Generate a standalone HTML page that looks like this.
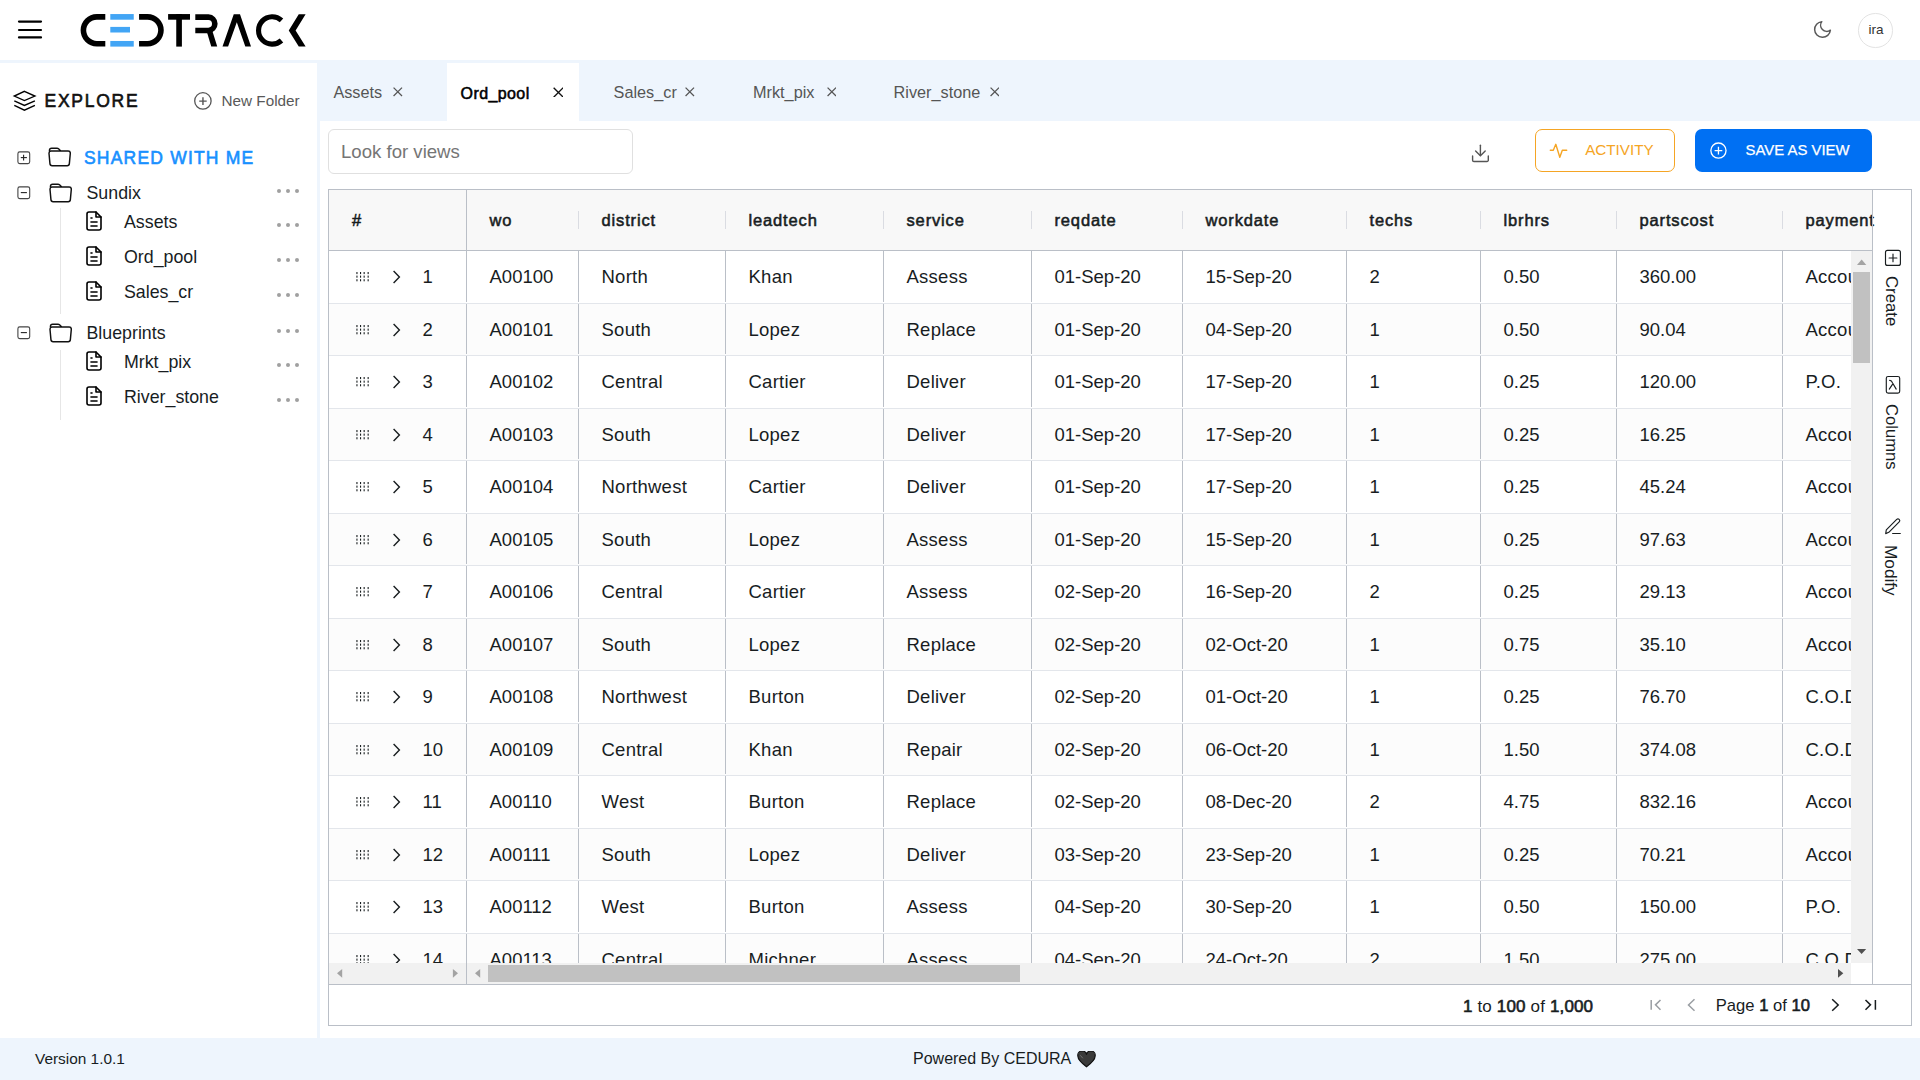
<!DOCTYPE html><html><head><meta charset="utf-8"><title>CEDTRACK</title><style>
*{box-sizing:border-box;margin:0;padding:0}
html,body{width:1920px;height:1080px;overflow:hidden}
body{background:#eef5fd;font-family:"Liberation Sans",sans-serif;color:#181d1f;position:relative}
.abs{position:absolute}
#hdr{position:absolute;left:0;top:0;width:1920px;height:60px;background:#fff}
#side{position:absolute;left:0;top:63px;width:317px;height:975px;background:#fff}
#content{position:absolute;left:320px;top:121px;width:1600px;height:917px;background:#fff}
#acttab{position:absolute;left:447px;top:63px;width:132px;height:58px;background:#fff}
.t{position:absolute;white-space:nowrap;line-height:1}
.tab{font-size:16.25px;color:#555}
.tabx{color:#555}
.tree{font-size:17.8px;color:#181d1f}
.dots{position:absolute;width:22px;height:5px}
.dots i{position:absolute;top:0;width:4.2px;height:4.2px;border-radius:50%;background:#a0a0a0}
#grid{position:absolute;left:328px;top:189px;width:1584px;height:837px;border:1px solid #babfc7;background:#fff;overflow:hidden}
.g{position:absolute}
.hc{font-size:16.5px;color:#181d1f;-webkit-text-stroke:0.55px #181d1f;letter-spacing:0.85px}
.cell{font-size:18.5px;color:#181d1f}
b{font-weight:normal;-webkit-text-stroke:0.6px #181d1f}
#footer{position:absolute;left:0;top:1038px;width:1920px;height:42px}
</style></head><body>
<div id="hdr">
<svg class="abs" style="left:0;top:0" width="60" height="60" viewBox="0 0 60 60"><g stroke="#000" stroke-width="2.2" stroke-linecap="round"><line x1="19" y1="21.6" x2="41" y2="21.6"/><line x1="19" y1="30" x2="41" y2="30"/><line x1="19" y1="37.4" x2="41" y2="37.4"/></g></svg>
<svg class="abs" style="left:0;top:0" width="320" height="60" viewBox="0 0 320 60">
<g fill="none" stroke="#000" stroke-width="5.6">
<path d="M105.3 16.86 H96.87 A13.47 13.47 0 0 0 96.87 43.8 H105.3"/>
<path d="M139.06 16.86 H147.5 A13.47 13.47 0 0 1 147.5 43.8 H139.06"/>
<path d="M195.3 17.1 H208.4 A6.68 6.68 0 0 1 208.4 30.45 H195.3"/>
<path d="M281.5 20.3 A13.7 13.7 0 1 0 281.5 40.5" stroke-width="5.1"/>
</g>
<g fill="#000">
<rect x="168.1" y="14.06" width="21.9" height="5.64"/>
<rect x="176.25" y="14.06" width="5.65" height="32.54"/>
<polygon points="206.6,31 212.4,31 217.2,46.6 211.25,46.6"/>
<polygon points="222.5,46.6 233.75,14.25 240,14.25 251,46.6 245.3,46.6 236.8,22.2 228.1,46.6"/>
<polygon points="298.75,14.25 305.6,14.25 295.6,30.4 305.6,46.6 298.75,46.6 288.75,30.4"/>
</g>
<g fill="#42a5f5">
<rect x="110.3" y="14.06" width="23.45" height="5.64"/>
<rect x="110.3" y="26.9" width="19.7" height="5.6"/>
<rect x="110.3" y="40.96" width="23.45" height="5.64"/>
</g>
</svg>
<svg class="abs" style="left:1812.3px;top:18.5px" width="21" height="21" viewBox="0 0 24 24"><path d="M21 12.79A9 9 0 1 1 11.21 3 7 7 0 0 0 21 12.79z" fill="none" stroke="#595959" stroke-width="1.7" stroke-linejoin="round"/></svg>
<div class="abs" style="left:1858px;top:13px;width:34.5px;height:34.5px;border:1px solid #e3e3e3;border-radius:50%"></div>
<div class="t" style="left:1868.5px;top:22.5px;font-size:13.5px;color:#333">ira</div>
</div>
<div id="side"></div>
<svg class="abs" style="left:0;top:80px" width="50" height="40" viewBox="0 80 50 40"><g fill="none" stroke="#000" stroke-width="1.4" stroke-linejoin="miter"><path d="M24.4 91.3 L34.9 96.1 L24.4 100.6 L14.3 96.1 Z"/><path d="M14.3 100.8 L24.4 105.4 L34.9 100.8"/><path d="M14.3 105.4 L24.4 110.2 L34.9 105.4"/></g></svg>
<div class="t" style="left:44.5px;top:93px;font-size:17.5px;letter-spacing:1.75px;color:#111;-webkit-text-stroke:0.6px #111">EXPLORE</div>
<svg class="abs" style="left:185px;top:85px" width="30" height="30" viewBox="185 85 30 30"><circle cx="202.9" cy="100.9" r="8.2" fill="none" stroke="#555" stroke-width="1.3"/><path d="M199.2 101.1 H206.7 M202.95 97.2 V105" stroke="#555" stroke-width="1.4"/></svg>
<div class="t" style="left:221.5px;top:93px;font-size:15.3px;color:#595959">New Folder</div>
<svg class="abs" style="left:17px;top:151px" width="14" height="14" viewBox="0 0 14 14"><rect x="0.9" y="0.9" width="11.8" height="11.7" rx="1.8" fill="none" stroke="#444" stroke-width="1.1"/><path d="M3.8 6.6 H9.9" stroke="#222" stroke-width="1.1"/><path d="M6.6 3.8 V9.6" stroke="#222" stroke-width="1.1"/></svg>
<svg class="abs" style="left:47.8px;top:146.4px" width="23.3" height="23.3" viewBox="0 0 16 16"><path d="M.54 3.87.5 3a2 2 0 0 1 2-2h3.672a2 2 0 0 1 1.414.586l.828.828A2 2 0 0 0 9.828 3h3.982a2 2 0 0 1 1.992 2.181l-.637 7A2 2 0 0 1 13.174 14H2.826a2 2 0 0 1-1.991-1.819l-.637-7a1.99 1.99 0 0 1 .342-1.31zM2.19 4a1 1 0 0 0-.996 1.09l.637 7a1 1 0 0 0 .995.91h10.348a1 1 0 0 0 .995-.91l.637-7A1 1 0 0 0 13.81 4H2.19zm4.69-1.707A1 1 0 0 0 6.172 2H2.5a1 1 0 0 0-1 .981l.006.139C1.72 3.042 1.95 3 2.19 3h5.396l-.707-.707z" fill="#111"/></svg>
<div class="t" style="left:84px;top:150px;font-size:17.5px;letter-spacing:1.2px;color:#1890ff;-webkit-text-stroke:0.6px #1890ff">SHARED WITH ME</div>
<svg class="abs" style="left:17px;top:186px" width="14" height="14" viewBox="0 0 14 14"><rect x="0.9" y="0.9" width="11.8" height="11.7" rx="1.8" fill="none" stroke="#444" stroke-width="1.1"/><path d="M3.8 6.6 H9.9" stroke="#222" stroke-width="1.1"/></svg>
<svg class="abs" style="left:48.7px;top:181.8px" width="23.3" height="23.3" viewBox="0 0 16 16"><path d="M.54 3.87.5 3a2 2 0 0 1 2-2h3.672a2 2 0 0 1 1.414.586l.828.828A2 2 0 0 0 9.828 3h3.982a2 2 0 0 1 1.992 2.181l-.637 7A2 2 0 0 1 13.174 14H2.826a2 2 0 0 1-1.991-1.819l-.637-7a1.99 1.99 0 0 1 .342-1.31zM2.19 4a1 1 0 0 0-.996 1.09l.637 7a1 1 0 0 0 .995.91h10.348a1 1 0 0 0 .995-.91l.637-7A1 1 0 0 0 13.81 4H2.19zm4.69-1.707A1 1 0 0 0 6.172 2H2.5a1 1 0 0 0-1 .981l.006.139C1.72 3.042 1.95 3 2.19 3h5.396l-.707-.707z" fill="#111"/></svg>
<div class="t tree" style="left:86.5px;top:185px">Sundix</div>
<div class="dots" style="left:277px;top:188.9px"><i style="left:0"></i><i style="left:8.7px"></i><i style="left:17.5px"></i></div>
<div class="abs" style="left:60px;top:208px;width:1px;height:106px;background:#e6e6e6"></div>
<svg class="abs" style="left:82px;top:208.8px" width="24" height="24" viewBox="0 0 24 24" fill="none" stroke="#000" stroke-width="1.6" stroke-linecap="round" stroke-linejoin="round"><path d="M14 3v5h5"/><path d="M17 21h-10a2 2 0 0 1 -2 -2v-14a2 2 0 0 1 2 -2h7l5 5v11a2 2 0 0 1 -2 2z"/><path d="M9 9h1"/><path d="M9 13h6"/><path d="M9 17h6"/></svg>
<div class="t tree" style="left:124px;top:214.39999999999998px">Assets</div>
<div class="dots" style="left:277px;top:222.9px"><i style="left:0"></i><i style="left:8.7px"></i><i style="left:17.5px"></i></div>
<svg class="abs" style="left:82px;top:244px" width="24" height="24" viewBox="0 0 24 24" fill="none" stroke="#000" stroke-width="1.6" stroke-linecap="round" stroke-linejoin="round"><path d="M14 3v5h5"/><path d="M17 21h-10a2 2 0 0 1 -2 -2v-14a2 2 0 0 1 2 -2h7l5 5v11a2 2 0 0 1 -2 2z"/><path d="M9 9h1"/><path d="M9 13h6"/><path d="M9 17h6"/></svg>
<div class="t tree" style="left:124px;top:249.39999999999998px">Ord_pool</div>
<div class="dots" style="left:277px;top:257.9px"><i style="left:0"></i><i style="left:8.7px"></i><i style="left:17.5px"></i></div>
<svg class="abs" style="left:82px;top:279.2px" width="24" height="24" viewBox="0 0 24 24" fill="none" stroke="#000" stroke-width="1.6" stroke-linecap="round" stroke-linejoin="round"><path d="M14 3v5h5"/><path d="M17 21h-10a2 2 0 0 1 -2 -2v-14a2 2 0 0 1 2 -2h7l5 5v11a2 2 0 0 1 -2 2z"/><path d="M9 9h1"/><path d="M9 13h6"/><path d="M9 17h6"/></svg>
<div class="t tree" style="left:124px;top:284.4px">Sales_cr</div>
<div class="dots" style="left:277px;top:292.7px"><i style="left:0"></i><i style="left:8.7px"></i><i style="left:17.5px"></i></div>
<svg class="abs" style="left:17px;top:326px" width="14" height="14" viewBox="0 0 14 14"><rect x="0.9" y="0.9" width="11.8" height="11.7" rx="1.8" fill="none" stroke="#444" stroke-width="1.1"/><path d="M3.8 6.6 H9.9" stroke="#222" stroke-width="1.1"/></svg>
<svg class="abs" style="left:48.7px;top:321.5px" width="23.3" height="23.3" viewBox="0 0 16 16"><path d="M.54 3.87.5 3a2 2 0 0 1 2-2h3.672a2 2 0 0 1 1.414.586l.828.828A2 2 0 0 0 9.828 3h3.982a2 2 0 0 1 1.992 2.181l-.637 7A2 2 0 0 1 13.174 14H2.826a2 2 0 0 1-1.991-1.819l-.637-7a1.99 1.99 0 0 1 .342-1.31zM2.19 4a1 1 0 0 0-.996 1.09l.637 7a1 1 0 0 0 .995.91h10.348a1 1 0 0 0 .995-.91l.637-7A1 1 0 0 0 13.81 4H2.19zm4.69-1.707A1 1 0 0 0 6.172 2H2.5a1 1 0 0 0-1 .981l.006.139C1.72 3.042 1.95 3 2.19 3h5.396l-.707-.707z" fill="#111"/></svg>
<div class="t tree" style="left:86.5px;top:324.7px">Blueprints</div>
<div class="dots" style="left:277px;top:328.79999999999995px"><i style="left:0"></i><i style="left:8.7px"></i><i style="left:17.5px"></i></div>
<div class="abs" style="left:60px;top:350px;width:1px;height:70px;background:#e6e6e6"></div>
<svg class="abs" style="left:82px;top:348.8px" width="24" height="24" viewBox="0 0 24 24" fill="none" stroke="#000" stroke-width="1.6" stroke-linecap="round" stroke-linejoin="round"><path d="M14 3v5h5"/><path d="M17 21h-10a2 2 0 0 1 -2 -2v-14a2 2 0 0 1 2 -2h7l5 5v11a2 2 0 0 1 -2 2z"/><path d="M9 9h1"/><path d="M9 13h6"/><path d="M9 17h6"/></svg>
<div class="t tree" style="left:124px;top:354.4px">Mrkt_pix</div>
<div class="dots" style="left:277px;top:362.7px"><i style="left:0"></i><i style="left:8.7px"></i><i style="left:17.5px"></i></div>
<svg class="abs" style="left:82px;top:383.8px" width="24" height="24" viewBox="0 0 24 24" fill="none" stroke="#000" stroke-width="1.6" stroke-linecap="round" stroke-linejoin="round"><path d="M14 3v5h5"/><path d="M17 21h-10a2 2 0 0 1 -2 -2v-14a2 2 0 0 1 2 -2h7l5 5v11a2 2 0 0 1 -2 2z"/><path d="M9 9h1"/><path d="M9 13h6"/><path d="M9 17h6"/></svg>
<div class="t tree" style="left:124px;top:389.2px">River_stone</div>
<div class="dots" style="left:277px;top:397.7px"><i style="left:0"></i><i style="left:8.7px"></i><i style="left:17.5px"></i></div>
<div id="acttab"></div>
<div id="content"></div>
<div class="t tab" style="left:333.4px;top:84px">Assets</div>
<svg class="abs" style="left:393px;top:87.3px" width="9.6" height="9.6" viewBox="0 0 10 10"><path d="M0.6 0.6 L9.4 9.4 M9.4 0.6 L0.6 9.4" stroke="#555" stroke-width="1.3"/></svg>
<div class="t tab" style="left:613.6px;top:84px">Sales_cr</div>
<svg class="abs" style="left:685.1px;top:87.3px" width="9.6" height="9.6" viewBox="0 0 10 10"><path d="M0.6 0.6 L9.4 9.4 M9.4 0.6 L0.6 9.4" stroke="#555" stroke-width="1.3"/></svg>
<div class="t tab" style="left:753px;top:84px">Mrkt_pix</div>
<svg class="abs" style="left:826.5px;top:87.3px" width="9.6" height="9.6" viewBox="0 0 10 10"><path d="M0.6 0.6 L9.4 9.4 M9.4 0.6 L0.6 9.4" stroke="#555" stroke-width="1.3"/></svg>
<div class="t tab" style="left:893.6px;top:84px">River_stone</div>
<svg class="abs" style="left:989.9px;top:87.3px" width="9.6" height="9.6" viewBox="0 0 10 10"><path d="M0.6 0.6 L9.4 9.4 M9.4 0.6 L0.6 9.4" stroke="#555" stroke-width="1.3"/></svg>
<div class="t" style="left:460.6px;top:85.5px;font-size:16px;letter-spacing:0.4px;-webkit-text-stroke:0.55px #000;color:#000">Ord_pool</div>
<svg class="abs" style="left:552.5px;top:86.6px" width="10.9" height="10.9" viewBox="0 0 10 10"><path d="M0.6 0.6 L9.4 9.4 M9.4 0.6 L0.6 9.4" stroke="#111" stroke-width="1.25"/></svg>
<div class="abs" style="left:328px;top:129px;width:305px;height:45px;border:1px solid #e0e0e0;border-radius:6px;background:#fff"></div>
<div class="t" style="left:341px;top:142.6px;font-size:18.6px;color:#757575">Look for views</div>
<svg class="abs" style="left:1468px;top:142px" width="24" height="24" viewBox="1468 142 24 24" fill="none" stroke="#555" stroke-width="1.4" stroke-linecap="round" stroke-linejoin="round"><path d="M1480.4 145.3 V155.5"/><path d="M1475.6 151 L1480.4 155.8 L1485.2 151"/><path d="M1472.6 156 V160.2 a1.3 1.3 0 0 0 1.3 1.3 H1487 a1.3 1.3 0 0 0 1.3 -1.3 V156"/></svg>
<div class="abs" style="left:1535px;top:129px;width:140px;height:43px;border:1px solid #f5a524;border-radius:7px"></div>
<svg class="abs" style="left:1545px;top:138px" width="26" height="26" viewBox="1545 138 26 26" fill="none" stroke="#f5a524" stroke-width="1.4" stroke-linejoin="round" stroke-linecap="round"><path d="M1550.3 150.3 H1553.3 L1555.8 144.3 L1559.8 157.3 L1562.3 150.3 H1566.7"/></svg>
<div class="t" style="left:1585.2px;top:142.3px;font-size:15.2px;color:#f5a524">ACTIVITY</div>
<div class="abs" style="left:1695px;top:129px;width:177px;height:43px;background:#0070f3;border-radius:7px"></div>
<svg class="abs" style="left:1705px;top:137px" width="28" height="28" viewBox="1705 137 28 28" fill="none" stroke="#fff" stroke-width="1.3"><circle cx="1718.45" cy="150.6" r="7.6"/><path d="M1714.6 150.6 H1722.3 M1718.45 146.8 V154.4"/></svg>
<div class="t" style="left:1745.6px;top:142.8px;font-size:14.9px;color:#fff;-webkit-text-stroke:0.25px #fff">SAVE AS VIEW</div>
<div id="grid"></div>
<div class="abs" style="left:329px;top:190px;width:1543px;height:60px;background:#f8f8f8"></div>
<div class="abs" style="left:329px;top:250px;width:1543px;height:1px;background:#babfc7"></div>
<div class="t hc" style="left:352px;top:212px">#</div>
<div class="t hc" style="left:489.5px;top:212.3px">wo</div>
<div class="t hc" style="left:601.5px;top:212.3px">district</div>
<div class="t hc" style="left:748.5px;top:212.3px">leadtech</div>
<div class="t hc" style="left:906.5px;top:212.3px">service</div>
<div class="t hc" style="left:1054.5px;top:212.3px">reqdate</div>
<div class="t hc" style="left:1205.5px;top:212.3px">workdate</div>
<div class="t hc" style="left:1369.5px;top:212.3px">techs</div>
<div class="t hc" style="left:1503.5px;top:212.3px">lbrhrs</div>
<div class="t hc" style="left:1639.5px;top:212.3px">partscost</div>
<div class="t hc" style="left:1805.5px;top:212.3px">payment</div>
<div class="abs" style="left:578px;top:211px;width:1px;height:18px;background:#dadce2"></div>
<div class="abs" style="left:725px;top:211px;width:1px;height:18px;background:#dadce2"></div>
<div class="abs" style="left:883px;top:211px;width:1px;height:18px;background:#dadce2"></div>
<div class="abs" style="left:1031px;top:211px;width:1px;height:18px;background:#dadce2"></div>
<div class="abs" style="left:1182px;top:211px;width:1px;height:18px;background:#dadce2"></div>
<div class="abs" style="left:1346px;top:211px;width:1px;height:18px;background:#dadce2"></div>
<div class="abs" style="left:1480px;top:211px;width:1px;height:18px;background:#dadce2"></div>
<div class="abs" style="left:1616px;top:211px;width:1px;height:18px;background:#dadce2"></div>
<div class="abs" style="left:1782px;top:211px;width:1px;height:18px;background:#dadce2"></div>
<div class="abs" style="left:329px;top:251px;width:1522px;height:712px;overflow:hidden">
<div class="abs" style="left:0;top:0.0px;width:1522px;height:52.5px;background:#fff"></div>
<div class="abs" style="left:137px;top:0.0px;width:1px;height:50.8px;background:#babfc7"></div>
<div class="abs" style="left:249px;top:0.0px;width:1px;height:50.8px;background:#babfc7"></div>
<div class="abs" style="left:396px;top:0.0px;width:1px;height:50.8px;background:#babfc7"></div>
<div class="abs" style="left:554px;top:0.0px;width:1px;height:50.8px;background:#babfc7"></div>
<div class="abs" style="left:702px;top:0.0px;width:1px;height:50.8px;background:#babfc7"></div>
<div class="abs" style="left:853px;top:0.0px;width:1px;height:50.8px;background:#babfc7"></div>
<div class="abs" style="left:1017px;top:0.0px;width:1px;height:50.8px;background:#babfc7"></div>
<div class="abs" style="left:1151px;top:0.0px;width:1px;height:50.8px;background:#babfc7"></div>
<div class="abs" style="left:1287px;top:0.0px;width:1px;height:50.8px;background:#babfc7"></div>
<div class="abs" style="left:1453px;top:0.0px;width:1px;height:50.8px;background:#babfc7"></div>
<div class="abs" style="left:0;top:51.5px;width:1522px;height:1px;background:#e3e6eb"></div>
<svg class="abs" style="left:26.5px;top:21.25px" width="14" height="10" viewBox="0 0 14 10" fill="#181d1f"><rect x="0.4" y="0.0" width="1.1" height="2.1"/><rect x="0.4" y="3.5999999999999996" width="1.1" height="2.1"/><rect x="0.4" y="7.199999999999999" width="1.1" height="2.1"/><rect x="4.0" y="0.0" width="1.1" height="2.1"/><rect x="4.0" y="3.5999999999999996" width="1.1" height="2.1"/><rect x="4.0" y="7.199999999999999" width="1.1" height="2.1"/><rect x="7.6" y="0.0" width="1.1" height="2.1"/><rect x="7.6" y="3.5999999999999996" width="1.1" height="2.1"/><rect x="7.6" y="7.199999999999999" width="1.1" height="2.1"/><rect x="11.6" y="0.0" width="1.1" height="2.1"/><rect x="11.6" y="3.5999999999999996" width="1.1" height="2.1"/><rect x="11.6" y="7.199999999999999" width="1.1" height="2.1"/></svg>
<svg class="abs" style="left:63px;top:19.25px" width="10" height="14" viewBox="0 0 10 14" fill="none" stroke="#181d1f" stroke-width="1.4"><path d="M1.6 1 L7.4 7 L1.6 13"/></svg>
<div class="t cell" style="left:93.5px;top:16.55px">1</div>
<div class="t cell" style="left:160.5px;top:16.55px">A00100</div>
<div class="t cell" style="left:272.5px;top:16.55px;letter-spacing:0.25px">North</div>
<div class="t cell" style="left:419.5px;top:16.55px;letter-spacing:0.25px">Khan</div>
<div class="t cell" style="left:577.5px;top:16.55px;letter-spacing:0.25px">Assess</div>
<div class="t cell" style="left:725.5px;top:16.55px">01-Sep-20</div>
<div class="t cell" style="left:876.5px;top:16.55px">15-Sep-20</div>
<div class="t cell" style="left:1040.5px;top:16.55px">2</div>
<div class="t cell" style="left:1174.5px;top:16.55px">0.50</div>
<div class="t cell" style="left:1310.5px;top:16.55px">360.00</div>
<div class="t cell" style="left:1476.5px;top:16.55px;letter-spacing:0.25px">Account</div>
<div class="abs" style="left:0;top:52.5px;width:1522px;height:52.5px;background:#fcfcfc"></div>
<div class="abs" style="left:137px;top:52.5px;width:1px;height:50.8px;background:#babfc7"></div>
<div class="abs" style="left:249px;top:52.5px;width:1px;height:50.8px;background:#babfc7"></div>
<div class="abs" style="left:396px;top:52.5px;width:1px;height:50.8px;background:#babfc7"></div>
<div class="abs" style="left:554px;top:52.5px;width:1px;height:50.8px;background:#babfc7"></div>
<div class="abs" style="left:702px;top:52.5px;width:1px;height:50.8px;background:#babfc7"></div>
<div class="abs" style="left:853px;top:52.5px;width:1px;height:50.8px;background:#babfc7"></div>
<div class="abs" style="left:1017px;top:52.5px;width:1px;height:50.8px;background:#babfc7"></div>
<div class="abs" style="left:1151px;top:52.5px;width:1px;height:50.8px;background:#babfc7"></div>
<div class="abs" style="left:1287px;top:52.5px;width:1px;height:50.8px;background:#babfc7"></div>
<div class="abs" style="left:1453px;top:52.5px;width:1px;height:50.8px;background:#babfc7"></div>
<div class="abs" style="left:0;top:104.0px;width:1522px;height:1px;background:#e3e6eb"></div>
<svg class="abs" style="left:26.5px;top:74.25px" width="14" height="10" viewBox="0 0 14 10" fill="#181d1f"><rect x="0.4" y="0.0" width="1.1" height="2.1"/><rect x="0.4" y="3.5999999999999996" width="1.1" height="2.1"/><rect x="0.4" y="7.199999999999999" width="1.1" height="2.1"/><rect x="4.0" y="0.0" width="1.1" height="2.1"/><rect x="4.0" y="3.5999999999999996" width="1.1" height="2.1"/><rect x="4.0" y="7.199999999999999" width="1.1" height="2.1"/><rect x="7.6" y="0.0" width="1.1" height="2.1"/><rect x="7.6" y="3.5999999999999996" width="1.1" height="2.1"/><rect x="7.6" y="7.199999999999999" width="1.1" height="2.1"/><rect x="11.6" y="0.0" width="1.1" height="2.1"/><rect x="11.6" y="3.5999999999999996" width="1.1" height="2.1"/><rect x="11.6" y="7.199999999999999" width="1.1" height="2.1"/></svg>
<svg class="abs" style="left:63px;top:72.25px" width="10" height="14" viewBox="0 0 10 14" fill="none" stroke="#181d1f" stroke-width="1.4"><path d="M1.6 1 L7.4 7 L1.6 13"/></svg>
<div class="t cell" style="left:93.5px;top:69.55px">2</div>
<div class="t cell" style="left:160.5px;top:69.55px">A00101</div>
<div class="t cell" style="left:272.5px;top:69.55px;letter-spacing:0.25px">South</div>
<div class="t cell" style="left:419.5px;top:69.55px;letter-spacing:0.25px">Lopez</div>
<div class="t cell" style="left:577.5px;top:69.55px;letter-spacing:0.25px">Replace</div>
<div class="t cell" style="left:725.5px;top:69.55px">01-Sep-20</div>
<div class="t cell" style="left:876.5px;top:69.55px">04-Sep-20</div>
<div class="t cell" style="left:1040.5px;top:69.55px">1</div>
<div class="t cell" style="left:1174.5px;top:69.55px">0.50</div>
<div class="t cell" style="left:1310.5px;top:69.55px">90.04</div>
<div class="t cell" style="left:1476.5px;top:69.55px;letter-spacing:0.25px">Account</div>
<div class="abs" style="left:0;top:105.0px;width:1522px;height:52.5px;background:#fff"></div>
<div class="abs" style="left:137px;top:105.0px;width:1px;height:50.8px;background:#babfc7"></div>
<div class="abs" style="left:249px;top:105.0px;width:1px;height:50.8px;background:#babfc7"></div>
<div class="abs" style="left:396px;top:105.0px;width:1px;height:50.8px;background:#babfc7"></div>
<div class="abs" style="left:554px;top:105.0px;width:1px;height:50.8px;background:#babfc7"></div>
<div class="abs" style="left:702px;top:105.0px;width:1px;height:50.8px;background:#babfc7"></div>
<div class="abs" style="left:853px;top:105.0px;width:1px;height:50.8px;background:#babfc7"></div>
<div class="abs" style="left:1017px;top:105.0px;width:1px;height:50.8px;background:#babfc7"></div>
<div class="abs" style="left:1151px;top:105.0px;width:1px;height:50.8px;background:#babfc7"></div>
<div class="abs" style="left:1287px;top:105.0px;width:1px;height:50.8px;background:#babfc7"></div>
<div class="abs" style="left:1453px;top:105.0px;width:1px;height:50.8px;background:#babfc7"></div>
<div class="abs" style="left:0;top:156.5px;width:1522px;height:1px;background:#e3e6eb"></div>
<svg class="abs" style="left:26.5px;top:126.25px" width="14" height="10" viewBox="0 0 14 10" fill="#181d1f"><rect x="0.4" y="0.0" width="1.1" height="2.1"/><rect x="0.4" y="3.5999999999999996" width="1.1" height="2.1"/><rect x="0.4" y="7.199999999999999" width="1.1" height="2.1"/><rect x="4.0" y="0.0" width="1.1" height="2.1"/><rect x="4.0" y="3.5999999999999996" width="1.1" height="2.1"/><rect x="4.0" y="7.199999999999999" width="1.1" height="2.1"/><rect x="7.6" y="0.0" width="1.1" height="2.1"/><rect x="7.6" y="3.5999999999999996" width="1.1" height="2.1"/><rect x="7.6" y="7.199999999999999" width="1.1" height="2.1"/><rect x="11.6" y="0.0" width="1.1" height="2.1"/><rect x="11.6" y="3.5999999999999996" width="1.1" height="2.1"/><rect x="11.6" y="7.199999999999999" width="1.1" height="2.1"/></svg>
<svg class="abs" style="left:63px;top:124.25px" width="10" height="14" viewBox="0 0 10 14" fill="none" stroke="#181d1f" stroke-width="1.4"><path d="M1.6 1 L7.4 7 L1.6 13"/></svg>
<div class="t cell" style="left:93.5px;top:121.55px">3</div>
<div class="t cell" style="left:160.5px;top:121.55px">A00102</div>
<div class="t cell" style="left:272.5px;top:121.55px;letter-spacing:0.25px">Central</div>
<div class="t cell" style="left:419.5px;top:121.55px;letter-spacing:0.25px">Cartier</div>
<div class="t cell" style="left:577.5px;top:121.55px;letter-spacing:0.25px">Deliver</div>
<div class="t cell" style="left:725.5px;top:121.55px">01-Sep-20</div>
<div class="t cell" style="left:876.5px;top:121.55px">17-Sep-20</div>
<div class="t cell" style="left:1040.5px;top:121.55px">1</div>
<div class="t cell" style="left:1174.5px;top:121.55px">0.25</div>
<div class="t cell" style="left:1310.5px;top:121.55px">120.00</div>
<div class="t cell" style="left:1476.5px;top:121.55px;letter-spacing:0.25px">P.O.</div>
<div class="abs" style="left:0;top:157.5px;width:1522px;height:52.5px;background:#fcfcfc"></div>
<div class="abs" style="left:137px;top:157.5px;width:1px;height:50.8px;background:#babfc7"></div>
<div class="abs" style="left:249px;top:157.5px;width:1px;height:50.8px;background:#babfc7"></div>
<div class="abs" style="left:396px;top:157.5px;width:1px;height:50.8px;background:#babfc7"></div>
<div class="abs" style="left:554px;top:157.5px;width:1px;height:50.8px;background:#babfc7"></div>
<div class="abs" style="left:702px;top:157.5px;width:1px;height:50.8px;background:#babfc7"></div>
<div class="abs" style="left:853px;top:157.5px;width:1px;height:50.8px;background:#babfc7"></div>
<div class="abs" style="left:1017px;top:157.5px;width:1px;height:50.8px;background:#babfc7"></div>
<div class="abs" style="left:1151px;top:157.5px;width:1px;height:50.8px;background:#babfc7"></div>
<div class="abs" style="left:1287px;top:157.5px;width:1px;height:50.8px;background:#babfc7"></div>
<div class="abs" style="left:1453px;top:157.5px;width:1px;height:50.8px;background:#babfc7"></div>
<div class="abs" style="left:0;top:209.0px;width:1522px;height:1px;background:#e3e6eb"></div>
<svg class="abs" style="left:26.5px;top:179.25px" width="14" height="10" viewBox="0 0 14 10" fill="#181d1f"><rect x="0.4" y="0.0" width="1.1" height="2.1"/><rect x="0.4" y="3.5999999999999996" width="1.1" height="2.1"/><rect x="0.4" y="7.199999999999999" width="1.1" height="2.1"/><rect x="4.0" y="0.0" width="1.1" height="2.1"/><rect x="4.0" y="3.5999999999999996" width="1.1" height="2.1"/><rect x="4.0" y="7.199999999999999" width="1.1" height="2.1"/><rect x="7.6" y="0.0" width="1.1" height="2.1"/><rect x="7.6" y="3.5999999999999996" width="1.1" height="2.1"/><rect x="7.6" y="7.199999999999999" width="1.1" height="2.1"/><rect x="11.6" y="0.0" width="1.1" height="2.1"/><rect x="11.6" y="3.5999999999999996" width="1.1" height="2.1"/><rect x="11.6" y="7.199999999999999" width="1.1" height="2.1"/></svg>
<svg class="abs" style="left:63px;top:177.25px" width="10" height="14" viewBox="0 0 10 14" fill="none" stroke="#181d1f" stroke-width="1.4"><path d="M1.6 1 L7.4 7 L1.6 13"/></svg>
<div class="t cell" style="left:93.5px;top:174.55px">4</div>
<div class="t cell" style="left:160.5px;top:174.55px">A00103</div>
<div class="t cell" style="left:272.5px;top:174.55px;letter-spacing:0.25px">South</div>
<div class="t cell" style="left:419.5px;top:174.55px;letter-spacing:0.25px">Lopez</div>
<div class="t cell" style="left:577.5px;top:174.55px;letter-spacing:0.25px">Deliver</div>
<div class="t cell" style="left:725.5px;top:174.55px">01-Sep-20</div>
<div class="t cell" style="left:876.5px;top:174.55px">17-Sep-20</div>
<div class="t cell" style="left:1040.5px;top:174.55px">1</div>
<div class="t cell" style="left:1174.5px;top:174.55px">0.25</div>
<div class="t cell" style="left:1310.5px;top:174.55px">16.25</div>
<div class="t cell" style="left:1476.5px;top:174.55px;letter-spacing:0.25px">Account</div>
<div class="abs" style="left:0;top:210.0px;width:1522px;height:52.5px;background:#fff"></div>
<div class="abs" style="left:137px;top:210.0px;width:1px;height:50.8px;background:#babfc7"></div>
<div class="abs" style="left:249px;top:210.0px;width:1px;height:50.8px;background:#babfc7"></div>
<div class="abs" style="left:396px;top:210.0px;width:1px;height:50.8px;background:#babfc7"></div>
<div class="abs" style="left:554px;top:210.0px;width:1px;height:50.8px;background:#babfc7"></div>
<div class="abs" style="left:702px;top:210.0px;width:1px;height:50.8px;background:#babfc7"></div>
<div class="abs" style="left:853px;top:210.0px;width:1px;height:50.8px;background:#babfc7"></div>
<div class="abs" style="left:1017px;top:210.0px;width:1px;height:50.8px;background:#babfc7"></div>
<div class="abs" style="left:1151px;top:210.0px;width:1px;height:50.8px;background:#babfc7"></div>
<div class="abs" style="left:1287px;top:210.0px;width:1px;height:50.8px;background:#babfc7"></div>
<div class="abs" style="left:1453px;top:210.0px;width:1px;height:50.8px;background:#babfc7"></div>
<div class="abs" style="left:0;top:261.5px;width:1522px;height:1px;background:#e3e6eb"></div>
<svg class="abs" style="left:26.5px;top:231.25px" width="14" height="10" viewBox="0 0 14 10" fill="#181d1f"><rect x="0.4" y="0.0" width="1.1" height="2.1"/><rect x="0.4" y="3.5999999999999996" width="1.1" height="2.1"/><rect x="0.4" y="7.199999999999999" width="1.1" height="2.1"/><rect x="4.0" y="0.0" width="1.1" height="2.1"/><rect x="4.0" y="3.5999999999999996" width="1.1" height="2.1"/><rect x="4.0" y="7.199999999999999" width="1.1" height="2.1"/><rect x="7.6" y="0.0" width="1.1" height="2.1"/><rect x="7.6" y="3.5999999999999996" width="1.1" height="2.1"/><rect x="7.6" y="7.199999999999999" width="1.1" height="2.1"/><rect x="11.6" y="0.0" width="1.1" height="2.1"/><rect x="11.6" y="3.5999999999999996" width="1.1" height="2.1"/><rect x="11.6" y="7.199999999999999" width="1.1" height="2.1"/></svg>
<svg class="abs" style="left:63px;top:229.25px" width="10" height="14" viewBox="0 0 10 14" fill="none" stroke="#181d1f" stroke-width="1.4"><path d="M1.6 1 L7.4 7 L1.6 13"/></svg>
<div class="t cell" style="left:93.5px;top:226.55px">5</div>
<div class="t cell" style="left:160.5px;top:226.55px">A00104</div>
<div class="t cell" style="left:272.5px;top:226.55px;letter-spacing:0.25px">Northwest</div>
<div class="t cell" style="left:419.5px;top:226.55px;letter-spacing:0.25px">Cartier</div>
<div class="t cell" style="left:577.5px;top:226.55px;letter-spacing:0.25px">Deliver</div>
<div class="t cell" style="left:725.5px;top:226.55px">01-Sep-20</div>
<div class="t cell" style="left:876.5px;top:226.55px">17-Sep-20</div>
<div class="t cell" style="left:1040.5px;top:226.55px">1</div>
<div class="t cell" style="left:1174.5px;top:226.55px">0.25</div>
<div class="t cell" style="left:1310.5px;top:226.55px">45.24</div>
<div class="t cell" style="left:1476.5px;top:226.55px;letter-spacing:0.25px">Account</div>
<div class="abs" style="left:0;top:262.5px;width:1522px;height:52.5px;background:#fcfcfc"></div>
<div class="abs" style="left:137px;top:262.5px;width:1px;height:50.8px;background:#babfc7"></div>
<div class="abs" style="left:249px;top:262.5px;width:1px;height:50.8px;background:#babfc7"></div>
<div class="abs" style="left:396px;top:262.5px;width:1px;height:50.8px;background:#babfc7"></div>
<div class="abs" style="left:554px;top:262.5px;width:1px;height:50.8px;background:#babfc7"></div>
<div class="abs" style="left:702px;top:262.5px;width:1px;height:50.8px;background:#babfc7"></div>
<div class="abs" style="left:853px;top:262.5px;width:1px;height:50.8px;background:#babfc7"></div>
<div class="abs" style="left:1017px;top:262.5px;width:1px;height:50.8px;background:#babfc7"></div>
<div class="abs" style="left:1151px;top:262.5px;width:1px;height:50.8px;background:#babfc7"></div>
<div class="abs" style="left:1287px;top:262.5px;width:1px;height:50.8px;background:#babfc7"></div>
<div class="abs" style="left:1453px;top:262.5px;width:1px;height:50.8px;background:#babfc7"></div>
<div class="abs" style="left:0;top:314.0px;width:1522px;height:1px;background:#e3e6eb"></div>
<svg class="abs" style="left:26.5px;top:284.25px" width="14" height="10" viewBox="0 0 14 10" fill="#181d1f"><rect x="0.4" y="0.0" width="1.1" height="2.1"/><rect x="0.4" y="3.5999999999999996" width="1.1" height="2.1"/><rect x="0.4" y="7.199999999999999" width="1.1" height="2.1"/><rect x="4.0" y="0.0" width="1.1" height="2.1"/><rect x="4.0" y="3.5999999999999996" width="1.1" height="2.1"/><rect x="4.0" y="7.199999999999999" width="1.1" height="2.1"/><rect x="7.6" y="0.0" width="1.1" height="2.1"/><rect x="7.6" y="3.5999999999999996" width="1.1" height="2.1"/><rect x="7.6" y="7.199999999999999" width="1.1" height="2.1"/><rect x="11.6" y="0.0" width="1.1" height="2.1"/><rect x="11.6" y="3.5999999999999996" width="1.1" height="2.1"/><rect x="11.6" y="7.199999999999999" width="1.1" height="2.1"/></svg>
<svg class="abs" style="left:63px;top:282.25px" width="10" height="14" viewBox="0 0 10 14" fill="none" stroke="#181d1f" stroke-width="1.4"><path d="M1.6 1 L7.4 7 L1.6 13"/></svg>
<div class="t cell" style="left:93.5px;top:279.55px">6</div>
<div class="t cell" style="left:160.5px;top:279.55px">A00105</div>
<div class="t cell" style="left:272.5px;top:279.55px;letter-spacing:0.25px">South</div>
<div class="t cell" style="left:419.5px;top:279.55px;letter-spacing:0.25px">Lopez</div>
<div class="t cell" style="left:577.5px;top:279.55px;letter-spacing:0.25px">Assess</div>
<div class="t cell" style="left:725.5px;top:279.55px">01-Sep-20</div>
<div class="t cell" style="left:876.5px;top:279.55px">15-Sep-20</div>
<div class="t cell" style="left:1040.5px;top:279.55px">1</div>
<div class="t cell" style="left:1174.5px;top:279.55px">0.25</div>
<div class="t cell" style="left:1310.5px;top:279.55px">97.63</div>
<div class="t cell" style="left:1476.5px;top:279.55px;letter-spacing:0.25px">Account</div>
<div class="abs" style="left:0;top:315.0px;width:1522px;height:52.5px;background:#fff"></div>
<div class="abs" style="left:137px;top:315.0px;width:1px;height:50.8px;background:#babfc7"></div>
<div class="abs" style="left:249px;top:315.0px;width:1px;height:50.8px;background:#babfc7"></div>
<div class="abs" style="left:396px;top:315.0px;width:1px;height:50.8px;background:#babfc7"></div>
<div class="abs" style="left:554px;top:315.0px;width:1px;height:50.8px;background:#babfc7"></div>
<div class="abs" style="left:702px;top:315.0px;width:1px;height:50.8px;background:#babfc7"></div>
<div class="abs" style="left:853px;top:315.0px;width:1px;height:50.8px;background:#babfc7"></div>
<div class="abs" style="left:1017px;top:315.0px;width:1px;height:50.8px;background:#babfc7"></div>
<div class="abs" style="left:1151px;top:315.0px;width:1px;height:50.8px;background:#babfc7"></div>
<div class="abs" style="left:1287px;top:315.0px;width:1px;height:50.8px;background:#babfc7"></div>
<div class="abs" style="left:1453px;top:315.0px;width:1px;height:50.8px;background:#babfc7"></div>
<div class="abs" style="left:0;top:366.5px;width:1522px;height:1px;background:#e3e6eb"></div>
<svg class="abs" style="left:26.5px;top:336.25px" width="14" height="10" viewBox="0 0 14 10" fill="#181d1f"><rect x="0.4" y="0.0" width="1.1" height="2.1"/><rect x="0.4" y="3.5999999999999996" width="1.1" height="2.1"/><rect x="0.4" y="7.199999999999999" width="1.1" height="2.1"/><rect x="4.0" y="0.0" width="1.1" height="2.1"/><rect x="4.0" y="3.5999999999999996" width="1.1" height="2.1"/><rect x="4.0" y="7.199999999999999" width="1.1" height="2.1"/><rect x="7.6" y="0.0" width="1.1" height="2.1"/><rect x="7.6" y="3.5999999999999996" width="1.1" height="2.1"/><rect x="7.6" y="7.199999999999999" width="1.1" height="2.1"/><rect x="11.6" y="0.0" width="1.1" height="2.1"/><rect x="11.6" y="3.5999999999999996" width="1.1" height="2.1"/><rect x="11.6" y="7.199999999999999" width="1.1" height="2.1"/></svg>
<svg class="abs" style="left:63px;top:334.25px" width="10" height="14" viewBox="0 0 10 14" fill="none" stroke="#181d1f" stroke-width="1.4"><path d="M1.6 1 L7.4 7 L1.6 13"/></svg>
<div class="t cell" style="left:93.5px;top:331.55px">7</div>
<div class="t cell" style="left:160.5px;top:331.55px">A00106</div>
<div class="t cell" style="left:272.5px;top:331.55px;letter-spacing:0.25px">Central</div>
<div class="t cell" style="left:419.5px;top:331.55px;letter-spacing:0.25px">Cartier</div>
<div class="t cell" style="left:577.5px;top:331.55px;letter-spacing:0.25px">Assess</div>
<div class="t cell" style="left:725.5px;top:331.55px">02-Sep-20</div>
<div class="t cell" style="left:876.5px;top:331.55px">16-Sep-20</div>
<div class="t cell" style="left:1040.5px;top:331.55px">2</div>
<div class="t cell" style="left:1174.5px;top:331.55px">0.25</div>
<div class="t cell" style="left:1310.5px;top:331.55px">29.13</div>
<div class="t cell" style="left:1476.5px;top:331.55px;letter-spacing:0.25px">Account</div>
<div class="abs" style="left:0;top:367.5px;width:1522px;height:52.5px;background:#fcfcfc"></div>
<div class="abs" style="left:137px;top:367.5px;width:1px;height:50.8px;background:#babfc7"></div>
<div class="abs" style="left:249px;top:367.5px;width:1px;height:50.8px;background:#babfc7"></div>
<div class="abs" style="left:396px;top:367.5px;width:1px;height:50.8px;background:#babfc7"></div>
<div class="abs" style="left:554px;top:367.5px;width:1px;height:50.8px;background:#babfc7"></div>
<div class="abs" style="left:702px;top:367.5px;width:1px;height:50.8px;background:#babfc7"></div>
<div class="abs" style="left:853px;top:367.5px;width:1px;height:50.8px;background:#babfc7"></div>
<div class="abs" style="left:1017px;top:367.5px;width:1px;height:50.8px;background:#babfc7"></div>
<div class="abs" style="left:1151px;top:367.5px;width:1px;height:50.8px;background:#babfc7"></div>
<div class="abs" style="left:1287px;top:367.5px;width:1px;height:50.8px;background:#babfc7"></div>
<div class="abs" style="left:1453px;top:367.5px;width:1px;height:50.8px;background:#babfc7"></div>
<div class="abs" style="left:0;top:419.0px;width:1522px;height:1px;background:#e3e6eb"></div>
<svg class="abs" style="left:26.5px;top:389.25px" width="14" height="10" viewBox="0 0 14 10" fill="#181d1f"><rect x="0.4" y="0.0" width="1.1" height="2.1"/><rect x="0.4" y="3.5999999999999996" width="1.1" height="2.1"/><rect x="0.4" y="7.199999999999999" width="1.1" height="2.1"/><rect x="4.0" y="0.0" width="1.1" height="2.1"/><rect x="4.0" y="3.5999999999999996" width="1.1" height="2.1"/><rect x="4.0" y="7.199999999999999" width="1.1" height="2.1"/><rect x="7.6" y="0.0" width="1.1" height="2.1"/><rect x="7.6" y="3.5999999999999996" width="1.1" height="2.1"/><rect x="7.6" y="7.199999999999999" width="1.1" height="2.1"/><rect x="11.6" y="0.0" width="1.1" height="2.1"/><rect x="11.6" y="3.5999999999999996" width="1.1" height="2.1"/><rect x="11.6" y="7.199999999999999" width="1.1" height="2.1"/></svg>
<svg class="abs" style="left:63px;top:387.25px" width="10" height="14" viewBox="0 0 10 14" fill="none" stroke="#181d1f" stroke-width="1.4"><path d="M1.6 1 L7.4 7 L1.6 13"/></svg>
<div class="t cell" style="left:93.5px;top:384.55px">8</div>
<div class="t cell" style="left:160.5px;top:384.55px">A00107</div>
<div class="t cell" style="left:272.5px;top:384.55px;letter-spacing:0.25px">South</div>
<div class="t cell" style="left:419.5px;top:384.55px;letter-spacing:0.25px">Lopez</div>
<div class="t cell" style="left:577.5px;top:384.55px;letter-spacing:0.25px">Replace</div>
<div class="t cell" style="left:725.5px;top:384.55px">02-Sep-20</div>
<div class="t cell" style="left:876.5px;top:384.55px">02-Oct-20</div>
<div class="t cell" style="left:1040.5px;top:384.55px">1</div>
<div class="t cell" style="left:1174.5px;top:384.55px">0.75</div>
<div class="t cell" style="left:1310.5px;top:384.55px">35.10</div>
<div class="t cell" style="left:1476.5px;top:384.55px;letter-spacing:0.25px">Account</div>
<div class="abs" style="left:0;top:420.0px;width:1522px;height:52.5px;background:#fff"></div>
<div class="abs" style="left:137px;top:420.0px;width:1px;height:50.8px;background:#babfc7"></div>
<div class="abs" style="left:249px;top:420.0px;width:1px;height:50.8px;background:#babfc7"></div>
<div class="abs" style="left:396px;top:420.0px;width:1px;height:50.8px;background:#babfc7"></div>
<div class="abs" style="left:554px;top:420.0px;width:1px;height:50.8px;background:#babfc7"></div>
<div class="abs" style="left:702px;top:420.0px;width:1px;height:50.8px;background:#babfc7"></div>
<div class="abs" style="left:853px;top:420.0px;width:1px;height:50.8px;background:#babfc7"></div>
<div class="abs" style="left:1017px;top:420.0px;width:1px;height:50.8px;background:#babfc7"></div>
<div class="abs" style="left:1151px;top:420.0px;width:1px;height:50.8px;background:#babfc7"></div>
<div class="abs" style="left:1287px;top:420.0px;width:1px;height:50.8px;background:#babfc7"></div>
<div class="abs" style="left:1453px;top:420.0px;width:1px;height:50.8px;background:#babfc7"></div>
<div class="abs" style="left:0;top:471.5px;width:1522px;height:1px;background:#e3e6eb"></div>
<svg class="abs" style="left:26.5px;top:441.25px" width="14" height="10" viewBox="0 0 14 10" fill="#181d1f"><rect x="0.4" y="0.0" width="1.1" height="2.1"/><rect x="0.4" y="3.5999999999999996" width="1.1" height="2.1"/><rect x="0.4" y="7.199999999999999" width="1.1" height="2.1"/><rect x="4.0" y="0.0" width="1.1" height="2.1"/><rect x="4.0" y="3.5999999999999996" width="1.1" height="2.1"/><rect x="4.0" y="7.199999999999999" width="1.1" height="2.1"/><rect x="7.6" y="0.0" width="1.1" height="2.1"/><rect x="7.6" y="3.5999999999999996" width="1.1" height="2.1"/><rect x="7.6" y="7.199999999999999" width="1.1" height="2.1"/><rect x="11.6" y="0.0" width="1.1" height="2.1"/><rect x="11.6" y="3.5999999999999996" width="1.1" height="2.1"/><rect x="11.6" y="7.199999999999999" width="1.1" height="2.1"/></svg>
<svg class="abs" style="left:63px;top:439.25px" width="10" height="14" viewBox="0 0 10 14" fill="none" stroke="#181d1f" stroke-width="1.4"><path d="M1.6 1 L7.4 7 L1.6 13"/></svg>
<div class="t cell" style="left:93.5px;top:436.55px">9</div>
<div class="t cell" style="left:160.5px;top:436.55px">A00108</div>
<div class="t cell" style="left:272.5px;top:436.55px;letter-spacing:0.25px">Northwest</div>
<div class="t cell" style="left:419.5px;top:436.55px;letter-spacing:0.25px">Burton</div>
<div class="t cell" style="left:577.5px;top:436.55px;letter-spacing:0.25px">Deliver</div>
<div class="t cell" style="left:725.5px;top:436.55px">02-Sep-20</div>
<div class="t cell" style="left:876.5px;top:436.55px">01-Oct-20</div>
<div class="t cell" style="left:1040.5px;top:436.55px">1</div>
<div class="t cell" style="left:1174.5px;top:436.55px">0.25</div>
<div class="t cell" style="left:1310.5px;top:436.55px">76.70</div>
<div class="t cell" style="left:1476.5px;top:436.55px;letter-spacing:0.25px">C.O.D.</div>
<div class="abs" style="left:0;top:472.5px;width:1522px;height:52.5px;background:#fcfcfc"></div>
<div class="abs" style="left:137px;top:472.5px;width:1px;height:50.8px;background:#babfc7"></div>
<div class="abs" style="left:249px;top:472.5px;width:1px;height:50.8px;background:#babfc7"></div>
<div class="abs" style="left:396px;top:472.5px;width:1px;height:50.8px;background:#babfc7"></div>
<div class="abs" style="left:554px;top:472.5px;width:1px;height:50.8px;background:#babfc7"></div>
<div class="abs" style="left:702px;top:472.5px;width:1px;height:50.8px;background:#babfc7"></div>
<div class="abs" style="left:853px;top:472.5px;width:1px;height:50.8px;background:#babfc7"></div>
<div class="abs" style="left:1017px;top:472.5px;width:1px;height:50.8px;background:#babfc7"></div>
<div class="abs" style="left:1151px;top:472.5px;width:1px;height:50.8px;background:#babfc7"></div>
<div class="abs" style="left:1287px;top:472.5px;width:1px;height:50.8px;background:#babfc7"></div>
<div class="abs" style="left:1453px;top:472.5px;width:1px;height:50.8px;background:#babfc7"></div>
<div class="abs" style="left:0;top:524.0px;width:1522px;height:1px;background:#e3e6eb"></div>
<svg class="abs" style="left:26.5px;top:494.25px" width="14" height="10" viewBox="0 0 14 10" fill="#181d1f"><rect x="0.4" y="0.0" width="1.1" height="2.1"/><rect x="0.4" y="3.5999999999999996" width="1.1" height="2.1"/><rect x="0.4" y="7.199999999999999" width="1.1" height="2.1"/><rect x="4.0" y="0.0" width="1.1" height="2.1"/><rect x="4.0" y="3.5999999999999996" width="1.1" height="2.1"/><rect x="4.0" y="7.199999999999999" width="1.1" height="2.1"/><rect x="7.6" y="0.0" width="1.1" height="2.1"/><rect x="7.6" y="3.5999999999999996" width="1.1" height="2.1"/><rect x="7.6" y="7.199999999999999" width="1.1" height="2.1"/><rect x="11.6" y="0.0" width="1.1" height="2.1"/><rect x="11.6" y="3.5999999999999996" width="1.1" height="2.1"/><rect x="11.6" y="7.199999999999999" width="1.1" height="2.1"/></svg>
<svg class="abs" style="left:63px;top:492.25px" width="10" height="14" viewBox="0 0 10 14" fill="none" stroke="#181d1f" stroke-width="1.4"><path d="M1.6 1 L7.4 7 L1.6 13"/></svg>
<div class="t cell" style="left:93.5px;top:489.55px">10</div>
<div class="t cell" style="left:160.5px;top:489.55px">A00109</div>
<div class="t cell" style="left:272.5px;top:489.55px;letter-spacing:0.25px">Central</div>
<div class="t cell" style="left:419.5px;top:489.55px;letter-spacing:0.25px">Khan</div>
<div class="t cell" style="left:577.5px;top:489.55px;letter-spacing:0.25px">Repair</div>
<div class="t cell" style="left:725.5px;top:489.55px">02-Sep-20</div>
<div class="t cell" style="left:876.5px;top:489.55px">06-Oct-20</div>
<div class="t cell" style="left:1040.5px;top:489.55px">1</div>
<div class="t cell" style="left:1174.5px;top:489.55px">1.50</div>
<div class="t cell" style="left:1310.5px;top:489.55px">374.08</div>
<div class="t cell" style="left:1476.5px;top:489.55px;letter-spacing:0.25px">C.O.D.</div>
<div class="abs" style="left:0;top:525.0px;width:1522px;height:52.5px;background:#fff"></div>
<div class="abs" style="left:137px;top:525.0px;width:1px;height:50.8px;background:#babfc7"></div>
<div class="abs" style="left:249px;top:525.0px;width:1px;height:50.8px;background:#babfc7"></div>
<div class="abs" style="left:396px;top:525.0px;width:1px;height:50.8px;background:#babfc7"></div>
<div class="abs" style="left:554px;top:525.0px;width:1px;height:50.8px;background:#babfc7"></div>
<div class="abs" style="left:702px;top:525.0px;width:1px;height:50.8px;background:#babfc7"></div>
<div class="abs" style="left:853px;top:525.0px;width:1px;height:50.8px;background:#babfc7"></div>
<div class="abs" style="left:1017px;top:525.0px;width:1px;height:50.8px;background:#babfc7"></div>
<div class="abs" style="left:1151px;top:525.0px;width:1px;height:50.8px;background:#babfc7"></div>
<div class="abs" style="left:1287px;top:525.0px;width:1px;height:50.8px;background:#babfc7"></div>
<div class="abs" style="left:1453px;top:525.0px;width:1px;height:50.8px;background:#babfc7"></div>
<div class="abs" style="left:0;top:576.5px;width:1522px;height:1px;background:#e3e6eb"></div>
<svg class="abs" style="left:26.5px;top:546.25px" width="14" height="10" viewBox="0 0 14 10" fill="#181d1f"><rect x="0.4" y="0.0" width="1.1" height="2.1"/><rect x="0.4" y="3.5999999999999996" width="1.1" height="2.1"/><rect x="0.4" y="7.199999999999999" width="1.1" height="2.1"/><rect x="4.0" y="0.0" width="1.1" height="2.1"/><rect x="4.0" y="3.5999999999999996" width="1.1" height="2.1"/><rect x="4.0" y="7.199999999999999" width="1.1" height="2.1"/><rect x="7.6" y="0.0" width="1.1" height="2.1"/><rect x="7.6" y="3.5999999999999996" width="1.1" height="2.1"/><rect x="7.6" y="7.199999999999999" width="1.1" height="2.1"/><rect x="11.6" y="0.0" width="1.1" height="2.1"/><rect x="11.6" y="3.5999999999999996" width="1.1" height="2.1"/><rect x="11.6" y="7.199999999999999" width="1.1" height="2.1"/></svg>
<svg class="abs" style="left:63px;top:544.25px" width="10" height="14" viewBox="0 0 10 14" fill="none" stroke="#181d1f" stroke-width="1.4"><path d="M1.6 1 L7.4 7 L1.6 13"/></svg>
<div class="t cell" style="left:93.5px;top:541.55px">11</div>
<div class="t cell" style="left:160.5px;top:541.55px">A00110</div>
<div class="t cell" style="left:272.5px;top:541.55px;letter-spacing:0.25px">West</div>
<div class="t cell" style="left:419.5px;top:541.55px;letter-spacing:0.25px">Burton</div>
<div class="t cell" style="left:577.5px;top:541.55px;letter-spacing:0.25px">Replace</div>
<div class="t cell" style="left:725.5px;top:541.55px">02-Sep-20</div>
<div class="t cell" style="left:876.5px;top:541.55px">08-Dec-20</div>
<div class="t cell" style="left:1040.5px;top:541.55px">2</div>
<div class="t cell" style="left:1174.5px;top:541.55px">4.75</div>
<div class="t cell" style="left:1310.5px;top:541.55px">832.16</div>
<div class="t cell" style="left:1476.5px;top:541.55px;letter-spacing:0.25px">Account</div>
<div class="abs" style="left:0;top:577.5px;width:1522px;height:52.5px;background:#fcfcfc"></div>
<div class="abs" style="left:137px;top:577.5px;width:1px;height:50.8px;background:#babfc7"></div>
<div class="abs" style="left:249px;top:577.5px;width:1px;height:50.8px;background:#babfc7"></div>
<div class="abs" style="left:396px;top:577.5px;width:1px;height:50.8px;background:#babfc7"></div>
<div class="abs" style="left:554px;top:577.5px;width:1px;height:50.8px;background:#babfc7"></div>
<div class="abs" style="left:702px;top:577.5px;width:1px;height:50.8px;background:#babfc7"></div>
<div class="abs" style="left:853px;top:577.5px;width:1px;height:50.8px;background:#babfc7"></div>
<div class="abs" style="left:1017px;top:577.5px;width:1px;height:50.8px;background:#babfc7"></div>
<div class="abs" style="left:1151px;top:577.5px;width:1px;height:50.8px;background:#babfc7"></div>
<div class="abs" style="left:1287px;top:577.5px;width:1px;height:50.8px;background:#babfc7"></div>
<div class="abs" style="left:1453px;top:577.5px;width:1px;height:50.8px;background:#babfc7"></div>
<div class="abs" style="left:0;top:629.0px;width:1522px;height:1px;background:#e3e6eb"></div>
<svg class="abs" style="left:26.5px;top:599.25px" width="14" height="10" viewBox="0 0 14 10" fill="#181d1f"><rect x="0.4" y="0.0" width="1.1" height="2.1"/><rect x="0.4" y="3.5999999999999996" width="1.1" height="2.1"/><rect x="0.4" y="7.199999999999999" width="1.1" height="2.1"/><rect x="4.0" y="0.0" width="1.1" height="2.1"/><rect x="4.0" y="3.5999999999999996" width="1.1" height="2.1"/><rect x="4.0" y="7.199999999999999" width="1.1" height="2.1"/><rect x="7.6" y="0.0" width="1.1" height="2.1"/><rect x="7.6" y="3.5999999999999996" width="1.1" height="2.1"/><rect x="7.6" y="7.199999999999999" width="1.1" height="2.1"/><rect x="11.6" y="0.0" width="1.1" height="2.1"/><rect x="11.6" y="3.5999999999999996" width="1.1" height="2.1"/><rect x="11.6" y="7.199999999999999" width="1.1" height="2.1"/></svg>
<svg class="abs" style="left:63px;top:597.25px" width="10" height="14" viewBox="0 0 10 14" fill="none" stroke="#181d1f" stroke-width="1.4"><path d="M1.6 1 L7.4 7 L1.6 13"/></svg>
<div class="t cell" style="left:93.5px;top:594.55px">12</div>
<div class="t cell" style="left:160.5px;top:594.55px">A00111</div>
<div class="t cell" style="left:272.5px;top:594.55px;letter-spacing:0.25px">South</div>
<div class="t cell" style="left:419.5px;top:594.55px;letter-spacing:0.25px">Lopez</div>
<div class="t cell" style="left:577.5px;top:594.55px;letter-spacing:0.25px">Deliver</div>
<div class="t cell" style="left:725.5px;top:594.55px">03-Sep-20</div>
<div class="t cell" style="left:876.5px;top:594.55px">23-Sep-20</div>
<div class="t cell" style="left:1040.5px;top:594.55px">1</div>
<div class="t cell" style="left:1174.5px;top:594.55px">0.25</div>
<div class="t cell" style="left:1310.5px;top:594.55px">70.21</div>
<div class="t cell" style="left:1476.5px;top:594.55px;letter-spacing:0.25px">Account</div>
<div class="abs" style="left:0;top:630.0px;width:1522px;height:52.5px;background:#fff"></div>
<div class="abs" style="left:137px;top:630.0px;width:1px;height:50.8px;background:#babfc7"></div>
<div class="abs" style="left:249px;top:630.0px;width:1px;height:50.8px;background:#babfc7"></div>
<div class="abs" style="left:396px;top:630.0px;width:1px;height:50.8px;background:#babfc7"></div>
<div class="abs" style="left:554px;top:630.0px;width:1px;height:50.8px;background:#babfc7"></div>
<div class="abs" style="left:702px;top:630.0px;width:1px;height:50.8px;background:#babfc7"></div>
<div class="abs" style="left:853px;top:630.0px;width:1px;height:50.8px;background:#babfc7"></div>
<div class="abs" style="left:1017px;top:630.0px;width:1px;height:50.8px;background:#babfc7"></div>
<div class="abs" style="left:1151px;top:630.0px;width:1px;height:50.8px;background:#babfc7"></div>
<div class="abs" style="left:1287px;top:630.0px;width:1px;height:50.8px;background:#babfc7"></div>
<div class="abs" style="left:1453px;top:630.0px;width:1px;height:50.8px;background:#babfc7"></div>
<div class="abs" style="left:0;top:681.5px;width:1522px;height:1px;background:#e3e6eb"></div>
<svg class="abs" style="left:26.5px;top:651.25px" width="14" height="10" viewBox="0 0 14 10" fill="#181d1f"><rect x="0.4" y="0.0" width="1.1" height="2.1"/><rect x="0.4" y="3.5999999999999996" width="1.1" height="2.1"/><rect x="0.4" y="7.199999999999999" width="1.1" height="2.1"/><rect x="4.0" y="0.0" width="1.1" height="2.1"/><rect x="4.0" y="3.5999999999999996" width="1.1" height="2.1"/><rect x="4.0" y="7.199999999999999" width="1.1" height="2.1"/><rect x="7.6" y="0.0" width="1.1" height="2.1"/><rect x="7.6" y="3.5999999999999996" width="1.1" height="2.1"/><rect x="7.6" y="7.199999999999999" width="1.1" height="2.1"/><rect x="11.6" y="0.0" width="1.1" height="2.1"/><rect x="11.6" y="3.5999999999999996" width="1.1" height="2.1"/><rect x="11.6" y="7.199999999999999" width="1.1" height="2.1"/></svg>
<svg class="abs" style="left:63px;top:649.25px" width="10" height="14" viewBox="0 0 10 14" fill="none" stroke="#181d1f" stroke-width="1.4"><path d="M1.6 1 L7.4 7 L1.6 13"/></svg>
<div class="t cell" style="left:93.5px;top:646.55px">13</div>
<div class="t cell" style="left:160.5px;top:646.55px">A00112</div>
<div class="t cell" style="left:272.5px;top:646.55px;letter-spacing:0.25px">West</div>
<div class="t cell" style="left:419.5px;top:646.55px;letter-spacing:0.25px">Burton</div>
<div class="t cell" style="left:577.5px;top:646.55px;letter-spacing:0.25px">Assess</div>
<div class="t cell" style="left:725.5px;top:646.55px">04-Sep-20</div>
<div class="t cell" style="left:876.5px;top:646.55px">30-Sep-20</div>
<div class="t cell" style="left:1040.5px;top:646.55px">1</div>
<div class="t cell" style="left:1174.5px;top:646.55px">0.50</div>
<div class="t cell" style="left:1310.5px;top:646.55px">150.00</div>
<div class="t cell" style="left:1476.5px;top:646.55px;letter-spacing:0.25px">P.O.</div>
<div class="abs" style="left:0;top:682.5px;width:1522px;height:52.5px;background:#fcfcfc"></div>
<div class="abs" style="left:137px;top:682.5px;width:1px;height:50.8px;background:#babfc7"></div>
<div class="abs" style="left:249px;top:682.5px;width:1px;height:50.8px;background:#babfc7"></div>
<div class="abs" style="left:396px;top:682.5px;width:1px;height:50.8px;background:#babfc7"></div>
<div class="abs" style="left:554px;top:682.5px;width:1px;height:50.8px;background:#babfc7"></div>
<div class="abs" style="left:702px;top:682.5px;width:1px;height:50.8px;background:#babfc7"></div>
<div class="abs" style="left:853px;top:682.5px;width:1px;height:50.8px;background:#babfc7"></div>
<div class="abs" style="left:1017px;top:682.5px;width:1px;height:50.8px;background:#babfc7"></div>
<div class="abs" style="left:1151px;top:682.5px;width:1px;height:50.8px;background:#babfc7"></div>
<div class="abs" style="left:1287px;top:682.5px;width:1px;height:50.8px;background:#babfc7"></div>
<div class="abs" style="left:1453px;top:682.5px;width:1px;height:50.8px;background:#babfc7"></div>
<div class="abs" style="left:0;top:734.0px;width:1522px;height:1px;background:#e3e6eb"></div>
<svg class="abs" style="left:26.5px;top:704.25px" width="14" height="10" viewBox="0 0 14 10" fill="#181d1f"><rect x="0.4" y="0.0" width="1.1" height="2.1"/><rect x="0.4" y="3.5999999999999996" width="1.1" height="2.1"/><rect x="0.4" y="7.199999999999999" width="1.1" height="2.1"/><rect x="4.0" y="0.0" width="1.1" height="2.1"/><rect x="4.0" y="3.5999999999999996" width="1.1" height="2.1"/><rect x="4.0" y="7.199999999999999" width="1.1" height="2.1"/><rect x="7.6" y="0.0" width="1.1" height="2.1"/><rect x="7.6" y="3.5999999999999996" width="1.1" height="2.1"/><rect x="7.6" y="7.199999999999999" width="1.1" height="2.1"/><rect x="11.6" y="0.0" width="1.1" height="2.1"/><rect x="11.6" y="3.5999999999999996" width="1.1" height="2.1"/><rect x="11.6" y="7.199999999999999" width="1.1" height="2.1"/></svg>
<svg class="abs" style="left:63px;top:702.25px" width="10" height="14" viewBox="0 0 10 14" fill="none" stroke="#181d1f" stroke-width="1.4"><path d="M1.6 1 L7.4 7 L1.6 13"/></svg>
<div class="t cell" style="left:93.5px;top:699.55px">14</div>
<div class="t cell" style="left:160.5px;top:699.55px">A00113</div>
<div class="t cell" style="left:272.5px;top:699.55px;letter-spacing:0.25px">Central</div>
<div class="t cell" style="left:419.5px;top:699.55px;letter-spacing:0.25px">Michner</div>
<div class="t cell" style="left:577.5px;top:699.55px;letter-spacing:0.25px">Assess</div>
<div class="t cell" style="left:725.5px;top:699.55px">04-Sep-20</div>
<div class="t cell" style="left:876.5px;top:699.55px">24-Oct-20</div>
<div class="t cell" style="left:1040.5px;top:699.55px">2</div>
<div class="t cell" style="left:1174.5px;top:699.55px">1.50</div>
<div class="t cell" style="left:1310.5px;top:699.55px">275.00</div>
<div class="t cell" style="left:1476.5px;top:699.55px;letter-spacing:0.25px">C.O.D.</div>
</div>
<div class="abs" style="left:466px;top:190px;width:1px;height:60px;background:#babfc7"></div>
<div class="abs" style="left:1851px;top:251px;width:21px;height:712px;background:#f1f1f1"></div>
<div class="abs" style="left:1853px;top:272px;width:17px;height:91px;background:#c1c1c1"></div>
<svg class="abs" style="left:1851px;top:251px" width="21" height="712" viewBox="0 0 21 712"><polygon points="6,14 15.3,14 10.65,8.5" fill="#a3a3a3"/><polygon points="6,698 15.2,698 10.6,703" fill="#505050"/></svg>
<div class="abs" style="left:329px;top:963px;width:1522px;height:21px;background:#f1f1f1"></div>
<div class="abs" style="left:488px;top:965px;width:532px;height:17px;background:#c1c1c1"></div>
<svg class="abs" style="left:329px;top:963px" width="1522" height="21" viewBox="0 0 1522 21"><polygon points="8,10.3 13.2,5.9 13.2,14.7" fill="#a3a3a3"/><polygon points="129.1,5.9 129.1,14.7 124,10.3" fill="#a3a3a3" transform="translate(253,0) scale(-1,1)"/><polygon points="146,10.3 151.2,5.9 151.2,14.7" fill="#a3a3a3"/><polygon points="1509,5.9 1514.3,10.3 1509,14.7" fill="#505050"/></svg>
<div class="abs" style="left:466px;top:963px;width:1px;height:21px;background:#babfc7"></div>
<div class="abs" style="left:329px;top:984px;width:1582px;height:1px;background:#babfc7"></div>
<div class="abs" style="left:1872px;top:190px;width:1px;height:794px;background:#babfc7"></div>
<svg class="abs" style="left:1873px;top:240px" width="38" height="300" viewBox="1873 240 38 300" fill="none" stroke="#181d1f" stroke-width="1.15" stroke-linecap="round" stroke-linejoin="round"><rect x="1885.5" y="250.4" width="14.9" height="15" rx="2"/><path d="M1889.1 258 H1896.9 M1893 254.1 V261.7"/><rect x="1886.3" y="376.5" width="13.4" height="16.6" rx="1.8"/><path d="M1889.7 380.4 C1891.2 380.3 1891.9 381.3 1892.6 383 L1896.2 389.1 M1892.3 384.6 L1889.3 389.1"/><path d="M1885.7 533.6 L1886.3 529.8 L1896.7 519.4 A1.75 1.75 0 0 1 1899.2 521.9 L1888.8 532.3 Z M1892.6 533.5 H1900.3"/></svg>
<div class="t" style="left:1899.3px;top:276px;font-size:16.8px;color:#181d1f;transform-origin:0 0;transform:rotate(90deg)">Create</div>
<div class="t" style="left:1899.3px;top:403.5px;font-size:16.6px;color:#181d1f;transform-origin:0 0;transform:rotate(90deg)">Columns</div>
<div class="t" style="left:1899.3px;top:544.5px;font-size:17.2px;color:#181d1f;transform-origin:0 0;transform:rotate(90deg)">Modify</div>
<div class="t" style="left:1463px;top:997.5px;font-size:17px;letter-spacing:0.15px;color:#181d1f"><b>1</b> to <b>100</b> of <b>1,000</b></div>
<svg class="abs" style="left:1645px;top:995px" width="240" height="20" viewBox="1645 995 240 20" fill="none" stroke-width="1.5"><path d="M1651.2 1000 V1009.7 M1660.5 1000 L1655.5 1004.85 L1660.5 1009.7" stroke="#9a9ea3"/><path d="M1694.5 999.3 L1688.5 1005 L1694.5 1010.8" stroke="#9a9ea3"/><path d="M1832.2 999.3 L1838.2 1005 L1832.2 1010.8" stroke="#181d1f"/><path d="M1865.5 1000 L1870.5 1004.85 L1865.5 1009.7 M1875.4 1000 V1009.7" stroke="#181d1f"/></svg>
<div class="t" style="left:1715.8px;top:998px;font-size:16.6px;letter-spacing:0px;color:#181d1f">Page <b>1</b> of <b>10</b></div>
<div class="t" style="left:35px;top:1051px;font-size:15.4px;color:#181d1f">Version 1.0.1</div>
<div class="t" style="left:913px;top:1051px;font-size:16px;color:#181d1f">Powered By CEDURA</div>
<svg class="abs" style="left:1077.2px;top:1050.8px" width="19" height="17" viewBox="0 0 19 17"><path d="M9.5 15.8 C4 11.5 0.9 8.6 0.9 5.2 A4.3 4.3 0 0 1 9.5 3.3 A4.3 4.3 0 0 1 18.1 5.2 C18.1 8.6 15 11.5 9.5 15.8Z" fill="#3a3a3a" stroke="#111" stroke-width="1.2" stroke-linejoin="round"/><path d="M3.6 4.6 L5.6 7" stroke="#777" stroke-width="0.9" stroke-linecap="round"/></svg>
</body></html>
